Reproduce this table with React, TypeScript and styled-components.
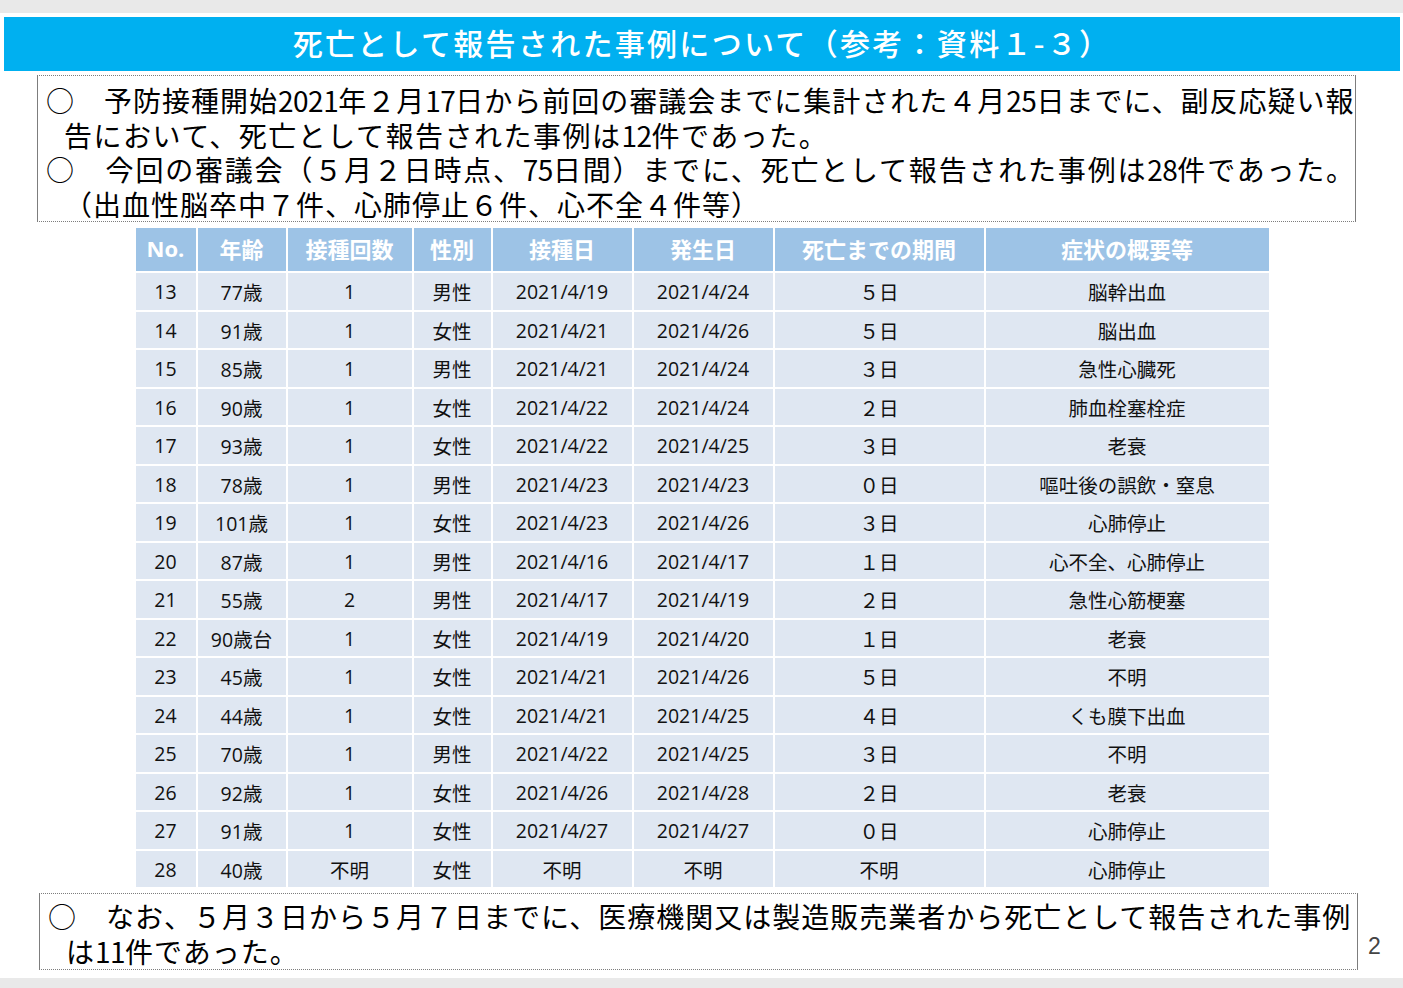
import styled, { createGlobalStyle } from "styled-components";

const GlobalStyle = createGlobalStyle`
  body {
    margin: 0;
    background: #e9e9e9;
    font-family: "Noto Sans CJK JP", "Noto Sans", sans-serif;
  }
`;

const Page = styled.div`
  width: 1403px;
  height: 988px;
  padding-top: 13px;
  box-sizing: border-box;
  background: #e9e9e9;
`;

const Slide = styled.div`
  height: 965px;
  background: #fff;
  padding: 4px 3px 0 4px;
  box-sizing: border-box;
  display: flex;
  flex-direction: column;
`;

const TitleBar = styled.h1`
  margin: 0;
  height: 54px;
  padding: 0 0 4px 0;
  box-sizing: border-box;
  background: #00b0f0;
  color: #fff;
  display: flex;
  align-items: center;
  justify-content: center;
  font-size: 30px;
  font-weight: 500;
  letter-spacing: 2.3px;
`;

const NoteBox = styled.div<{ $height: number; $left: number; $pad: number }>`
  margin-left: ${(p) => p.$left}px;
  width: 1319px;
  height: ${(p) => p.$height}px;
  box-sizing: border-box;
  padding: ${(p) => p.$pad}px 0 0 8px;
  border: 1px solid #7d7d7d;
  border-top-style: dotted;
  border-bottom-style: dotted;
  color: #000;
  font-size: 28px;
  line-height: 34.5px;
`;

const Line = styled.div<{ $indent?: boolean; $ls?: number }>`
  white-space: nowrap;
  padding-left: ${(p) => (p.$indent ? 18 : 0)}px;
  letter-spacing: ${(p) => p.$ls ?? 1}px;
`;

const Num = styled.span`
  letter-spacing: -0.5px;
`;

const Table = styled.table`
  margin: 6px auto 0;
  border-collapse: collapse;
  table-layout: fixed;
  width: 1135px;
  font-family: "Open Sans", "Noto Sans CJK JP", sans-serif;
`;

const HeadCell = styled.th<{ $w: number }>`
  width: ${(p) => p.$w}px;
  height: 40px;
  padding: 0 0 3px;
  background: #9dc3e6;
  color: #fff;
  font-family: "Open Sans", "Noto Sans CJK JP", sans-serif;
  font-size: 22px;
  font-weight: 700;
  border: 2px solid #fff;
  border-top: 0;
`;

const Cell = styled.td`
  height: 38.5px;
  padding: 1px 0 0;
  box-sizing: border-box;
  background: #dfe7f2;
  color: #111;
  text-align: center;
  font-size: 19.5px;
  border: 2px solid #fff;
`;

const BottomRow = styled.div`
  margin-top: 4px;
  display: flex;
  align-items: flex-start;
`;

const PageNum = styled.div`
  margin: 40px 0 0 10px;
  font-family: "Liberation Sans", sans-serif;
  font-size: 23px;
  color: #444;
`;

const columns: [string, number][] = [
  ["No.", 62],
  ["年齢", 90],
  ["接種回数", 126],
  ["性別", 79],
  ["接種日", 141],
  ["発生日", 141],
  ["死亡までの期間", 211],
  ["症状の概要等", 285],
];

const rows: string[][] = [
  ["13", "77歳", "1", "男性", "2021/4/19", "2021/4/24", "５日", "脳幹出血"],
  ["14", "91歳", "1", "女性", "2021/4/21", "2021/4/26", "５日", "脳出血"],
  ["15", "85歳", "1", "男性", "2021/4/21", "2021/4/24", "３日", "急性心臓死"],
  ["16", "90歳", "1", "女性", "2021/4/22", "2021/4/24", "２日", "肺血栓塞栓症"],
  ["17", "93歳", "1", "女性", "2021/4/22", "2021/4/25", "３日", "老衰"],
  ["18", "78歳", "1", "男性", "2021/4/23", "2021/4/23", "０日", "嘔吐後の誤飲・窒息"],
  ["19", "101歳", "1", "女性", "2021/4/23", "2021/4/26", "３日", "心肺停止"],
  ["20", "87歳", "1", "男性", "2021/4/16", "2021/4/17", "１日", "心不全、心肺停止"],
  ["21", "55歳", "2", "男性", "2021/4/17", "2021/4/19", "２日", "急性心筋梗塞"],
  ["22", "90歳台", "1", "女性", "2021/4/19", "2021/4/20", "１日", "老衰"],
  ["23", "45歳", "1", "女性", "2021/4/21", "2021/4/26", "５日", "不明"],
  ["24", "44歳", "1", "女性", "2021/4/21", "2021/4/25", "４日", "くも膜下出血"],
  ["25", "70歳", "1", "男性", "2021/4/22", "2021/4/25", "３日", "不明"],
  ["26", "92歳", "1", "女性", "2021/4/26", "2021/4/28", "２日", "老衰"],
  ["27", "91歳", "1", "女性", "2021/4/27", "2021/4/27", "０日", "心肺停止"],
  ["28", "40歳", "不明", "女性", "不明", "不明", "不明", "心肺停止"],
];

// half-width digits in the slide font are narrower than in Noto, so squeeze them a bit
const withNums = (text: string) =>
  text.split(/(\d+)/).map((part, i) => (/^\d+$/.test(part) ? <Num key={i}>{part}</Num> : part));

export default function App() {
  return (
    <Page>
      <GlobalStyle />
      <Slide>
        <TitleBar>死亡として報告された事例について（参考：資料１-３）</TitleBar>

        <NoteBox $height={147} $left={33} $pad={7} style={{ marginTop: 4 }}>
          <Line>{withNums("○　予防接種開始2021年２月17日から前回の審議会までに集計された４月25日までに、副反応疑い報")}</Line>
          <Line $indent $ls={1.5}>{withNums("告において、死亡として報告された事例は12件であった。")}</Line>
          <Line $ls={1.8}>{withNums("○　今回の審議会（５月２日時点、75日間）までに、死亡として報告された事例は28件であった。")}</Line>
          <Line $indent>（出血性脳卒中７件、心肺停止６件、心不全４件等）</Line>
        </NoteBox>

        <Table>
          <thead>
            <tr>
              {columns.map(([label, w]) => (
                <HeadCell key={label} $w={w - 2}>
                  {label}
                </HeadCell>
              ))}
            </tr>
          </thead>
          <tbody>
            {rows.map((r) => (
              <tr key={r[0]}>
                {r.map((v, i) => (
                  <Cell key={i}>{v}</Cell>
                ))}
              </tr>
            ))}
          </tbody>
        </Table>

        <BottomRow>
          <NoteBox $height={77} $left={35} $pad={5}>
            <Line>○　なお、５月３日から５月７日までに、医療機関又は製造販売業者から死亡として報告された事例</Line>
            <Line $indent>{withNums("は11件であった。")}</Line>
          </NoteBox>
          <PageNum>2</PageNum>
        </BottomRow>
      </Slide>
    </Page>
  );
}
